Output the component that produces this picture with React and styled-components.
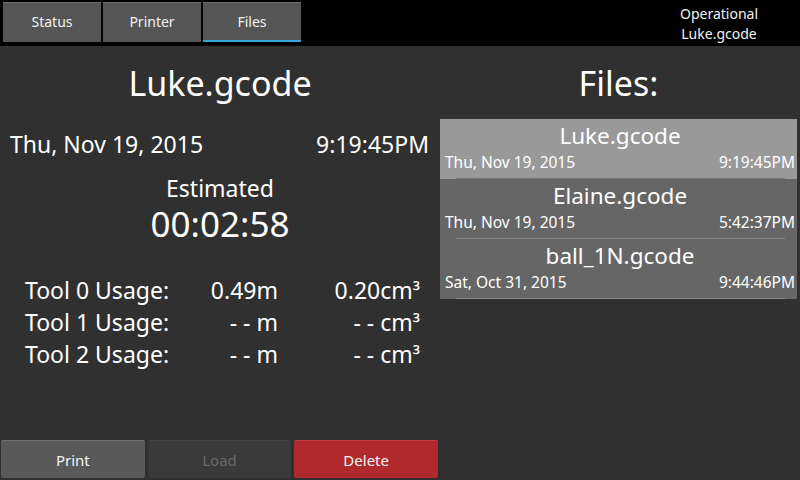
import styled, { createGlobalStyle } from "styled-components";

const GlobalStyle = createGlobalStyle`
  html, body {
    margin: 0;
    padding: 0;
    background: #303030;
  }
  body {
    font-family: "Noto Sans", "Open Sans", sans-serif;
    color: #ffffff;
  }
`;

//#region Styled Components

const Screen = styled.div`
  width: 800px;
  height: 480px;
  display: flex;
  flex-direction: column;
  background: #303030;
  overflow: hidden;
`;

const TopBar = styled.header`
  height: 46px;
  background: #000000;
  display: flex;
  align-items: flex-start;
  padding: 2px 0 0 3px;
  box-sizing: border-box;
`;

const Tabs = styled.nav`
  display: flex;
  gap: 2px;
`;

const Tab = styled.div`
  width: 98px;
  height: 40px;
  box-sizing: border-box;
  background: #555555;
  border-top: 1px solid #6a6a6a;
  border-bottom: 2px solid ${(p) => (p.$active ? "#33a7d8" : "#555555")};
  display: flex;
  align-items: center;
  justify-content: center;
  font-size: 14px;
  color: #f2f2f2;
`;

const PrinterState = styled.div`
  margin-left: auto;
  width: 160px;
  margin-right: 1px;
  text-align: center;
  font-size: 14px;
  line-height: 20px;
  margin-top: 2px;
  color: #f2f2f2;
`;

const Body = styled.main`
  flex: 1;
  display: flex;
`;

const LeftPanel = styled.section`
  width: 440px;
  display: flex;
  flex-direction: column;
`;

const Title = styled.h1`
  margin: 14px 0 0;
  height: 44px;
  font-size: 34px;
  font-weight: normal;
  text-align: center;
  line-height: 46px;
`;

const DateRow = styled.div`
  display: flex;
  justify-content: space-between;
  padding: 0 11px 0 10px;
  margin-top: 26px;
  font-size: 23px;
  line-height: 28px;
`;

const EstimatedLabel = styled.div`
  margin-top: 18px;
  text-align: center;
  font-size: 23px;
  line-height: 24px;
`;

const EstimatedTime = styled.div`
  margin-top: 5px;
  text-align: center;
  font-size: 35px;
  line-height: 38px;
`;

const UsageTable = styled.div`
  margin-top: 31px;
  display: grid;
  grid-template-columns: 160px 93px 142px;
  grid-auto-rows: 32px;
  padding-left: 25px;
  font-size: 23px;
  align-items: center;
`;

const Cell = styled.div`
  text-align: ${(p) => (p.$right ? "right" : "left")};
`;

const Cube = styled.span`
  font-size: 0.9em;
`;

const ButtonBar = styled.div`
  margin-top: auto;
  display: flex;
  gap: 3px;
  padding: 0 2px 2px 1px;
`;

const ActionButton = styled.div`
  flex: 1;
  height: 38px;
  box-sizing: border-box;
  display: flex;
  align-items: center;
  justify-content: center;
  font-size: 15px;
  border-radius: 2px;
  background: ${(p) => p.$bg};
  border-top: 1px solid ${(p) => p.$edge};
  color: ${(p) => (p.$disabled ? "#6a6a6a" : "#f4f4f4")};
`;

const RightPanel = styled.section`
  flex: 1;
  display: flex;
  flex-direction: column;
`;

const FilesTitle = styled.h2`
  margin: 14px 0 0;
  height: 44px;
  font-size: 34px;
  font-weight: normal;
  text-align: center;
  line-height: 46px;
  padding-right: 3px;
`;

const FileList = styled.ul`
  list-style: none;
  margin: 15px 3px 0 0;
  padding: 0;
`;

const FileItem = styled.li`
  height: 60px;
  box-sizing: border-box;
  background: ${(p) => (p.$selected ? "#999999" : "#666666")};
  padding: 0 2px 0 5px;
  position: relative;
  display: flex;
  flex-direction: column;

  &::after {
    content: "";
    position: absolute;
    left: 16px;
    right: 12px;
    bottom: 0;
    height: 1px;
    background: ${(p) => (p.$selected ? "#7a7a7a" : "#858585")};
  }
`;

const FileName = styled.div`
  text-align: center;
  font-size: 22.5px;
  line-height: 30px;
  margin-top: 2px;
`;

const FileMeta = styled.div`
  display: flex;
  justify-content: space-between;
  font-size: 15.5px;
  line-height: 22px;
`;

//#endregion

const files = [
  { name: "Luke.gcode", date: "Thu, Nov 19, 2015", time: "9:19:45PM", selected: true },
  { name: "Elaine.gcode", date: "Thu, Nov 19, 2015", time: "5:42:37PM" },
  { name: "ball_1N.gcode", date: "Sat, Oct 31, 2015", time: "9:44:46PM" },
];

const usage = [
  ["Tool 0 Usage:", "0.49m", "0.20cm"],
  ["Tool 1 Usage:", "- - m", "- - cm"],
  ["Tool 2 Usage:", "- - m", "- - cm"],
];

export default function App() {
  return (
    <>
      <GlobalStyle />
      <Screen>
        <TopBar>
          <Tabs>
            <Tab>Status</Tab>
            <Tab>Printer</Tab>
            <Tab $active>Files</Tab>
          </Tabs>
          <PrinterState>
            Operational
            <br />
            Luke.gcode
          </PrinterState>
        </TopBar>
        <Body>
          <LeftPanel>
            <Title>Luke.gcode</Title>
            <DateRow>
              <span>Thu, Nov 19, 2015</span>
              <span>9:19:45PM</span>
            </DateRow>
            <EstimatedLabel>Estimated</EstimatedLabel>
            <EstimatedTime>00:02:58</EstimatedTime>
            <UsageTable>
              {usage.flatMap(([label, len, vol]) => [
                <Cell key={label + "a"}>{label}</Cell>,
                <Cell key={label + "b"} $right>{len}</Cell>,
                <Cell key={label + "c"} $right>
                  {vol}
                  <Cube>³</Cube>
                </Cell>,
              ])}
            </UsageTable>
            <ButtonBar>
              <ActionButton $bg="#595959" $edge="#6e6e6e">Print</ActionButton>
              <ActionButton $bg="#3a3a3a" $edge="#444444" $disabled>Load</ActionButton>
              <ActionButton $bg="#b0292d" $edge="#c03a3e">Delete</ActionButton>
            </ButtonBar>
          </LeftPanel>
          <RightPanel>
            <FilesTitle>Files:</FilesTitle>
            <FileList>
              {files.map((f) => (
                <FileItem key={f.name} $selected={f.selected}>
                  <FileName>{f.name}</FileName>
                  <FileMeta>
                    <span>{f.date}</span>
                    <span>{f.time}</span>
                  </FileMeta>
                </FileItem>
              ))}
            </FileList>
          </RightPanel>
        </Body>
      </Screen>
    </>
  );
}
